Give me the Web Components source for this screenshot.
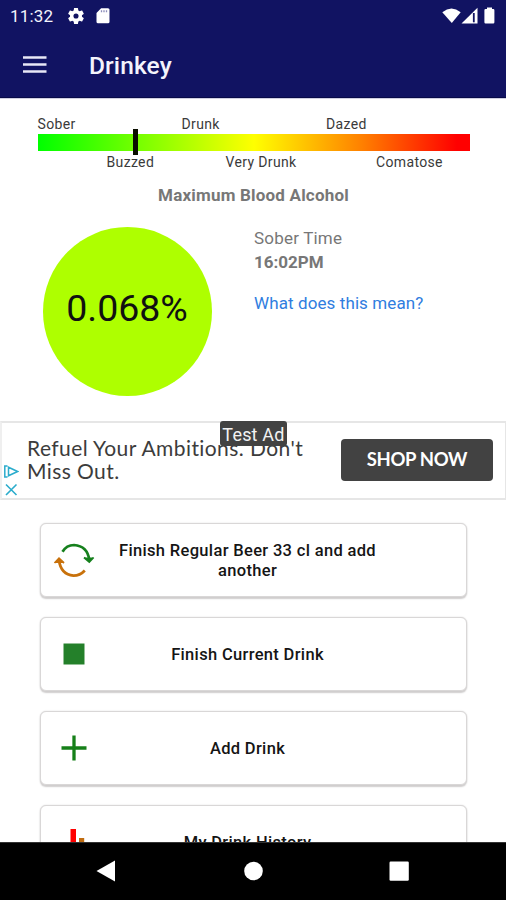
<!DOCTYPE html>
<html lang="en">
<head>
<meta charset="utf-8">
<title>Drinkey</title>
<style>
html,body{margin:0;padding:0;background:#fff}
body{width:506px;height:900px;overflow:hidden;font-family:Roboto,"Liberation Sans",sans-serif}
</style>
</head>
<body>
<drinkey-app></drinkey-app>
<script>
const define = (name, html) => {
  const tpl = document.createElement('template');
  tpl.innerHTML = '<style>*{box-sizing:border-box}svg{display:block;flex:none}</style>' + html;
  customElements.define(name, class extends HTMLElement {
    constructor() {
      super();
      this.attachShadow({ mode: 'open' }).append(tpl.content.cloneNode(true));
    }
  });
};

define('status-bar', `
<style>
:host{display:flex;height:32px;padding:0 8px 0 10px;align-items:center;color:#f4f4fc}
.time{font-size:17px;line-height:32px;width:58px;letter-spacing:.2px}
.left{flex:1;display:flex;gap:12px}
.right{display:flex;align-items:center}
</style>
<div class="time">11:32</div>
<div class="left">
<svg width="16" height="16" viewBox="2 2 20 20" fill="#fff"><path d="M19.43 12.98c.04-.32.07-.64.07-.98s-.03-.66-.07-.98l2.11-1.65c.19-.15.24-.42.12-.64l-2-3.46c-.12-.22-.39-.3-.61-.22l-2.49 1c-.52-.4-1.08-.73-1.69-.98l-.38-2.65A.49.49 0 0 0 14 2h-4c-.25 0-.46.18-.49.42l-.38 2.65c-.61.25-1.17.59-1.69.98l-2.49-1c-.23-.09-.49 0-.61.22l-2 3.46c-.13.22-.07.49.12.64l2.11 1.65c-.04.32-.07.65-.07.98s.03.66.07.98l-2.11 1.65c-.19.15-.24.42-.12.64l2 3.46c.12.22.39.3.61.22l2.49-1c.52.4 1.08.73 1.69.98l.38 2.65c.03.24.24.42.49.42h4c.25 0 .46-.18.49-.42l.38-2.65c.61-.25 1.17-.59 1.69-.98l2.49 1c.23.09.49 0 .61-.22l2-3.46c.12-.22.07-.49-.12-.64zM12 15.2a3.2 3.2 0 1 1 0-6.4 3.2 3.2 0 0 1 0 6.4z"/></svg>
<svg width="14" height="16" viewBox="-.5 0 14 16"><path d="M4.600.3H11.500Q13 .3 13 1.800V13.800Q13 15.300 11.500 15.300H1.500Q0 15.300 0 13.800V5z" fill="#fff"/><path d="M5 2.200v2M7.500 2.200v2M10 2.200v2" stroke="#8c8cba" stroke-width="1.300"/></svg>
</div>
<div class="right">
<svg width="62" height="18" viewBox="0 0 62 18" fill="#fff"><path d="M6.300 5.200Q15.500-2.200 24.700 5.200L15.800 16z"/><path d="M25.500 16.500L41.500.7V16.500z"/><path d="M37.800 6v9.300" stroke="#111362" stroke-width="1.800"/><path d="M51 .5h5v1.600h1.200q1.200 0 1.200 1.200v12q0 1.200-1.200 1.200h-7.600q-1.200 0-1.200-1.200v-12q0-1.200 1.200-1.200H51z"/></svg>
</div>`);

define('app-bar', `
<style>
:host{display:flex;height:66px;align-items:center;padding:0 0 0 23px;gap:42px;border-bottom:1px solid #080a48;color:#f4f4fc}
.title{font-size:24.500px;font-weight:500;line-height:32px;padding-top:2px;letter-spacing:.1px}
</style>
<svg width="24" height="18" viewBox="0 0 24 18" stroke="#e8e8f6" stroke-width="2.600"><path d="M0 1.500h23.500M0 8.500h23.500M0 15.500h23.500"/></svg>
<div class="title"><slot></slot></div>`);

define('bac-scale', `
<style>
:host{display:block;padding:16px 0 0 37.500px;color:#3a3a3a;font-size:14px;line-height:18px;letter-spacing:.35px}
.row{display:grid;height:18px;white-space:nowrap}
.top{grid-template-columns:144px 144.500px auto}
.bottom{grid-template-columns:119px 150.500px auto;padding-left:69px;margin-top:2px}
.bar{position:relative;width:432px;height:17px;margin-top:1px;background:linear-gradient(90deg,#0f0,#ff0 50%,#ff8000 75%,#f00 97%)}
.mark{position:absolute;left:95.500px;top:-5px;width:4.500px;height:26px;background:#0a0f00}
</style>
<div class="row top"><span>Sober</span><span>Drunk</span><span>Dazed</span></div>
<div class="bar"><div class="mark"></div></div>
<div class="row bottom"><span>Buzzed</span><span>Very Drunk</span><span>Comatose</span></div>`);

define('bac-summary', `
<style>
:host{display:block;color:#777;font-size:17px}
h2{margin:0;padding-top:14px;font-size:17px;line-height:20px;font-weight:700;text-align:center;letter-spacing:.2px;padding-left:1px}
.body{display:flex;padding:22px 0 0 42.500px;gap:42.500px}
.disc{width:169px;height:169px;border-radius:50%;background:#aeff00;color:#111;display:flex;justify-content:center;font-size:37.500px;line-height:163px}
.info{line-height:24px;letter-spacing:.2px;white-space:nowrap}
.info>div:first-child{margin-top:-1px}
.info b{display:block;font-weight:700;letter-spacing:0}
.info a{display:block;color:#2f7de0;margin-top:17px;letter-spacing:.1px}
</style>
<h2>Maximum Blood Alcohol</h2>
<div class="body"><div class="disc">0.068%</div>
<div class="info"><div>Sober Time</div><b>16:02PM</b><a>What does this mean?</a></div></div>`);

define('ad-banner', `
<style>
:host{display:flex;position:relative;height:79px;border:2px solid #e6e6e6;border-left-color:#efefef;border-right-width:1px;padding:0 12px 2px 0;align-items:center;font-family:Lato,sans-serif}
.marks{width:25px;padding:42px 0 0 1px}
.copy{flex:1;font-size:21px;line-height:23px;color:#3c3c3c;letter-spacing:.42px;white-space:nowrap;padding-bottom:1px}
.cta{width:152px;height:42px;border-radius:4px;background:#424242;color:#fff;font-size:18.500px;line-height:41px;font-weight:700;text-align:center;letter-spacing:-.35px}
.tag{position:absolute;left:218px;top:-2px;width:67px;height:25px;border-radius:3px;background:#424242;color:#f2f2f2;font:18px/27px Roboto,sans-serif;text-align:center;letter-spacing:.2px}
</style>
<div class="marks"><svg width="16" height="34" viewBox="0 0 16 34" fill="none" stroke="#2baccc" stroke-width="1.500"><path d="M4.500 13H1.800V2H4.500M5.500 3.300V11.700L14.500 7.500z"/><path d="M3 20.500L13.500 31M13.500 20.500L3 31" stroke-width="1.600"/></svg></div>
<div class="copy">Refuel Your Ambitions. Don't<br>Miss Out.</div>
<div class="cta">SHOP NOW</div>
<div class="tag">Test Ad</div>`);

define('action-card', `
<style>
:host{display:flex;height:74px;border:1px solid #d9d7d7;border-radius:6px;background:#fff;box-shadow:0 2px 1.500px #cfcdcd,0 0 1.500px #d4d2d2;align-items:center;padding-right:73px}
.icon{width:66px;display:flex;justify-content:center}
.label{flex:1;text-align:center;font-size:16.500px;font-weight:500;line-height:20px;color:#151515;letter-spacing:.33px;padding:2.500px 5px 0 0}
</style>
<div class="icon"><slot name="icon"></slot></div>
<div class="label"><slot></slot></div>`);

define('action-list', `
<style>
:host{display:flex;flex-direction:column;gap:19.900px;padding:24px 39px 0 40px}
</style>
<action-card><svg slot="icon" width="42" height="40" viewBox="0 1 42 40" fill="none" stroke-width="2.700"><g stroke="#16801d"><path d="M9.500 12.800Q13.500 6 21 6Q34.500 7 36.300 21"/><path d="M31 18.500L36.300 23 40.600 18.500" fill="#16801d" stroke-width="1.800"/></g><g stroke="#c8710b"><path d="M31.800 31.500Q27 36.700 20.500 36.700Q8 35.500 6 21.500"/><path d="M1.500 24L6 19.300 11 24" fill="#c8710b" stroke-width="1.800"/></g></svg>Finish Regular Beer 33 cl and add another</action-card>
<action-card><svg slot="icon" width="22" height="22" viewBox="0 0 22 22"><path d="M.5 .5h21v21H.5z" fill="#24802a"/></svg>Finish Current Drink</action-card>
<action-card><svg slot="icon" width="26" height="26" viewBox="0 0 26 26" stroke="#168019" stroke-width="3.300"><path d="M.5 13h25M13 .5v25"/></svg>Add Drink</action-card>
<action-card><svg slot="icon" width="28" height="28" viewBox="0 -1 28 28"><path d="M10.500 0H16v28h-5.500z" fill="#f00"/><path d="M19 9h5.200v19H19z" fill="#c06c10"/></svg>My Drink History</action-card>`);

define('nav-bar', `
<style>
:host{display:flex;height:58px;background:#000;border-top:1px solid #333}
</style>
<svg width="506" height="57" viewBox="0 843 506 57" fill="#fff"><path d="M96.500 871L115 860.500V881.500z"/><circle cx="253.500" cy="871" r="9.300"/><rect x="389.500" y="861.500" width="19.300" height="19.300" rx="1.200"/></svg>`);

define('drinkey-app', `
<style>
:host{display:flex;flex-direction:column;width:506px;height:900px;background:#fff;overflow:hidden}
header{background:#111362;height:99px;flex:none;border-bottom:1px solid #cfcfe2}
main{flex:1;min-height:0;overflow:hidden}
ad-banner{margin-top:25px}
action-list{margin-top:-1px}
nav-bar{flex:none}
</style>
<header><status-bar></status-bar><app-bar>Drinkey</app-bar></header>
<main><bac-scale></bac-scale><bac-summary></bac-summary><ad-banner></ad-banner><action-list></action-list></main>
<nav-bar></nav-bar>`);
</script>
</body>
</html>
